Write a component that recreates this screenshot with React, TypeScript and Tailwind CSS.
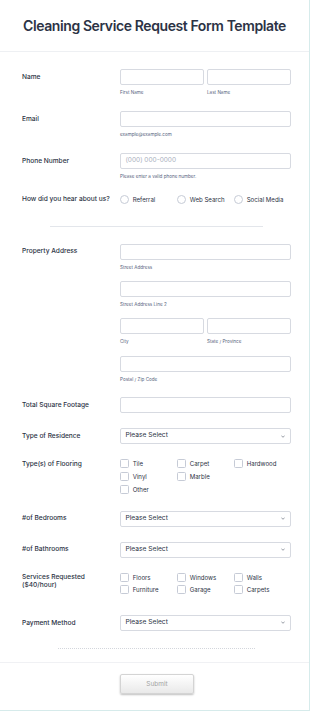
import type { ReactNode } from 'react'

const labelCls = 'w-[98px] shrink-0 text-[6.6px] font-medium leading-[8.5px] text-[#2c3345] pt-[3.75px] whitespace-nowrap'
const inputCls = 'h-[16px] w-full rounded-[2px] border border-[#d7dae1] bg-white'
const subCls = 'mt-[4px] h-[8px] text-[4.6px] leading-[8px] text-[#57647e] whitespace-nowrap'

function Field({ label, className = '', children }: { label: ReactNode; className?: string; children: ReactNode }) {
  return (
    <div className={`flex ${className}`}>
      <div className={labelCls}>{label}</div>
      <div className="flex-1 min-w-0">{children}</div>
    </div>
  )
}

function Input({ sub, placeholder }: { sub?: string; placeholder?: string }) {
  return (
    <div className="flex-1 min-w-0">
      <div className={`${inputCls} flex items-center px-[4.5px] text-[6.5px] text-[#a9afbd]`}>{placeholder}</div>
      {sub && <div className={subCls}>{sub}</div>}
    </div>
  )
}

function Select() {
  return (
    <div className={`${inputCls} flex items-center justify-between pl-[4.5px] pr-[5px]`}>
      <span className="text-[6.65px] text-[#2c3345]">Please Select</span>
      <svg width="4" height="3" viewBox="0 0 4 3">
        <path d="M0.4 0.6 L2 2.3 L3.6 0.6" fill="none" stroke="#6b7280" strokeWidth="0.7" />
      </svg>
    </div>
  )
}

function Box() {
  return <span className="w-[9px] h-[9px] shrink-0 rounded-[1.5px] border border-[#c6cbd6] bg-white" />
}

function Checks({ rows }: { rows: string[][] }) {
  return (
    <div className="pt-[1.65px]">
      {rows.map((row, i) => (
        <div key={i} className="flex h-[12.7px] items-center">
          {row.map((item) => (
            <div key={item} className="w-[57px] flex items-center gap-[3.7px]">
              <Box />
              <span className="text-[6.1px] text-[#2c3345]">{item}</span>
            </div>
          ))}
        </div>
      ))}
    </div>
  )
}

export default function App() {
  return (
    <div className="w-[310px] h-[711px] bg-white border-r border-b border-[#d6ebeb] font-['Inter',sans-serif] overflow-hidden">
      {/* Header */}
      <div className="h-[52px] border-b border-[#eef0f3] flex items-center justify-center">
        <h1 className="text-[14px] font-semibold tracking-[-0.4px] text-[#2c3345]">
          Cleaning Service Request Form Template
        </h1>
      </div>

      <div className="pl-[22px] pr-[18px] pt-[17px] pb-[12.7px]">
        <Field label="Name">
          <div className="flex gap-[3px]">
            <Input sub="First Name" />
            <Input sub="Last Name" />
          </div>
        </Field>

        <Field label="Email" className="mt-[14px]">
          <Input sub="example@example.com" />
        </Field>

        <Field label="Phone Number" className="mt-[14px]">
          <Input sub="Please enter a valid phone number." placeholder="(000) 000-0000" />
        </Field>

        <Field label="How did you hear about us?" className="mt-[10.3px]">
          <div className="flex h-[16px] items-center">
            {['Referral', 'Web Search', 'Social Media'].map((r, i) => (
              <div key={r} className={`flex items-center gap-[3.7px] ${i < 2 ? 'w-[57px]' : ''}`}>
                <span className="w-[9px] h-[9px] shrink-0 rounded-full border border-[#c6cbd6] bg-white" />
                <span className="text-[6.1px] text-[#2c3345] whitespace-nowrap">{r}</span>
              </div>
            ))}
          </div>
        </Field>

        <div className="mt-[18.7px] ml-[28px] w-[213px] h-px bg-[#e3e6eb]" />

        <Field label="Property Address" className="mt-[16.7px]">
          <div className="flex flex-col gap-[9.3px]">
            <Input sub="Street Address" />
            <Input sub="Street Address Line 2" />
            <div className="flex gap-[3px]">
              <Input sub="City" />
              <Input sub="State / Province" />
            </div>
            <Input sub="Postal / Zip Code" />
          </div>
        </Field>

        <Field label="Total Square Footage" className="mt-[13.6px]">
          <Input />
        </Field>

        <Field label="Type of Residence" className="mt-[15px]">
          <Select />
        </Field>

        <Field label="Type(s) of Flooring" className="mt-[11.7px]">
          <Checks rows={[['Tile', 'Carpet', 'Hardwood'], ['Vinyl', 'Marble'], ['Other']]} />
        </Field>

        <Field label="#of Bedrooms" className="mt-[15px]">
          <Select />
        </Field>

        <Field label="#of Bathrooms" className="mt-[15px]">
          <Select />
        </Field>

        <Field label={<>Services Requested<br />($40/hour)</>} className="mt-[11.6px]">
          <Checks rows={[['Floors', 'Windows', 'Walls'], ['Furniture', 'Garage', 'Carpets']]} />
        </Field>

        <Field label="Payment Method" className="mt-[18.6px]">
          <Select />
        </Field>

        <div className="mt-[17.3px] ml-[36px] w-[197px] border-t border-dotted border-[#d3d6dc]" />
      </div>

      {/* Footer */}
      <div className="flex border-t border-[#f0f1f4] pt-[11.7px] pl-[120px]">
        <button className="w-[74px] h-[19.6px] rounded-[2px] border border-[#d4d4d4] bg-gradient-to-b from-white to-[#e9e9e9] shadow-[0_1px_2px_rgba(0,0,0,0.25)] text-[6.5px] leading-none text-[#a3a3a3]">
          Submit
        </button>
      </div>
    </div>
  )
}
